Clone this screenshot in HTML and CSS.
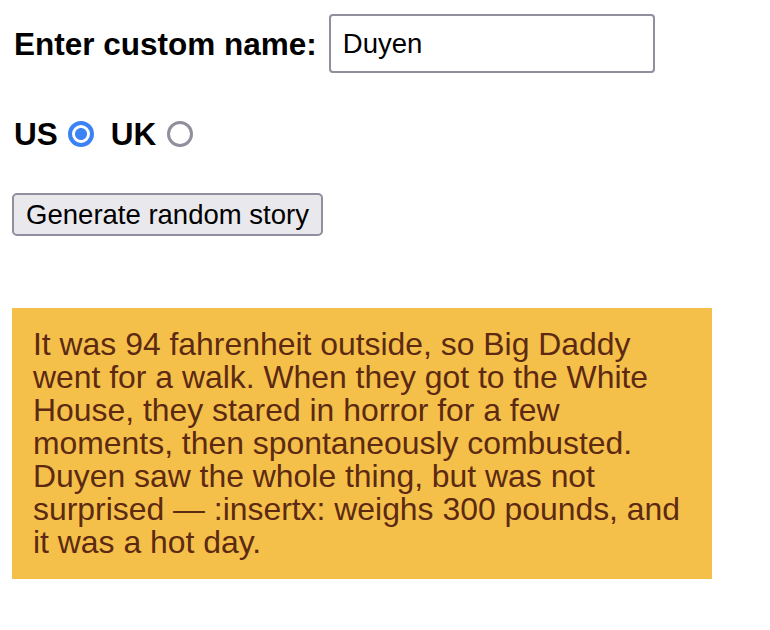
FILE: index.html
```html
<!DOCTYPE html>
<html lang="en">
<head>
<meta charset="utf-8">
<title>Silly story generator</title>
<link rel="stylesheet" href="styles.css">
</head>
<body>
  <div class="name-row">
    <label class="label" for="customname">Enter custom name:</label>
    <input class="text-input" id="customname" type="text" value="Duyen">
  </div>
  <div class="country-row">
    <label class="label" for="us">US</label>
    <input class="radio radio-us" id="us" type="radio" name="ukus" value="us" checked>
    <label class="label uk" for="uk">UK</label>
    <input class="radio radio-uk" id="uk" type="radio" name="ukus" value="uk">
  </div>
  <div class="button-row">
    <button class="randomize" type="button">Generate random story</button>
  </div>
  <p class="story">It was 94 fahrenheit outside, so Big Daddy went for a walk. When they got to the White House, they stared in horror for a few moments, then spontaneously combusted. Duyen saw the whole thing, but was not surprised — :insertx: weighs 300 pounds, and it was a hot day.</p>
</body>
</html>
```

FILE: styles.css
```css
html, body {
  background: #ffffff;
}

body {
  margin: 0;
  padding: 14px 12px;
  font-family: "Liberation Sans", Arial, Helvetica, sans-serif;
  color: #000;
}

.label {
  font-weight: bold;
  font-size: 31.5px;
  line-height: 36px;
}

.name-row {
  display: flex;
  align-items: center;
  gap: 12px;
  padding-left: 2px;
}

.text-input {
  box-sizing: border-box;
  width: 326px;
  height: 59px;
  margin: 0;
  padding: 0 12px;
  border: 2px solid #8f8f9d;
  border-radius: 4px;
  font-family: "Liberation Sans", Arial, sans-serif;
  font-size: 27.5px;
  color: #000;
  background: #fff;
  outline: none;
}

.country-row {
  display: flex;
  align-items: center;
  margin-top: 43px;
  padding-left: 2px;
}

.radio {
  appearance: none;
  -webkit-appearance: none;
  box-sizing: border-box;
  width: 26px;
  height: 26px;
  margin: 0;
  border-radius: 50%;
  border: 3px solid #8f8f9d;
  background: #fff;
}

.radio-us {
  margin-left: 10px;
}

.radio-uk {
  margin-left: 11px;
}

.radio:checked {
  border: 4px solid #3b82f6;
  background: radial-gradient(circle, #3b82f6 0 5.5px, #fff 6.5px);
}

.uk {
  margin-left: 17px;
}

.button-row {
  margin-top: 41px;
}

.randomize {
  box-sizing: border-box;
  height: 43px;
  width: 311px;
  margin: 0;
  padding: 0 10px;
  border: 2px solid #8f8f9d;
  border-radius: 5px;
  background: #e9e9ed;
  font-family: "Liberation Sans", Arial, sans-serif;
  font-size: 27.5px;
  color: #000;
}

.story {
  box-sizing: border-box;
  width: 700px;
  margin: 72px 0 0;
  padding: 20px 21px;
  background: #f5c04a;
  color: #5c2a12;
  font-size: 31.9px;
  line-height: 33px;
}
```
